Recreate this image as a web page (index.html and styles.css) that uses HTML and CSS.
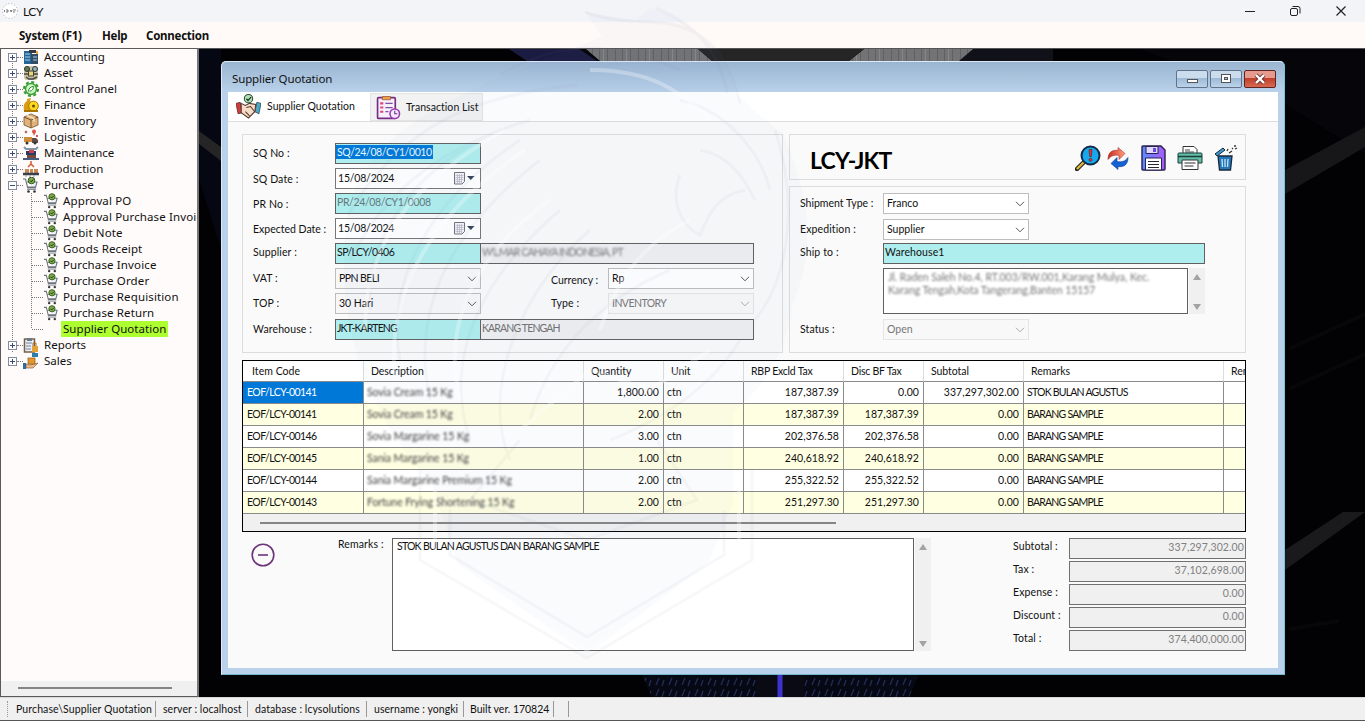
FILE: index.html
```html
<!DOCTYPE html>
<html lang="en">
<head>
<meta charset="utf-8">
<title>LCY</title>
<link rel="stylesheet" href="styles.css">
</head>
<body>
<svg class="defs" width="0" height="0">
  <symbol id="cart" viewBox="0 0 16 16"><path d="M0 2h2.500l2.200 9H13M4 5h10L12.600 10H5" fill="#eef2f6" stroke="#6b737d" stroke-width="1.100"/><circle cx="8.500" cy="3.500" r="3.300" fill="#7fae4a" stroke="#34591f"/><path d="M7 3.500l1.200 1.300L10.300 2.500" fill="none" stroke="#173010"/><path d="M4 12.500h9" stroke="#8d949c"/><circle cx="5.500" cy="14.500" r="1.300" fill="#333"/><circle cx="11.500" cy="14.500" r="1.300" fill="#333"/></symbol>
  <symbol id="chev" viewBox="0 0 10 6"><path d="M1 .8l4 4 4-4" fill="none" stroke="currentColor"/></symbol>
  <symbol id="cal" viewBox="0 0 21 13"><path d="M.5.5h10v9l-2.500 2.500H.5z" fill="#f4f5f8" stroke="#70747e"/><path d="M3.500 2v9M5.500 2v9M7.500 2v9M1.500 3.500h8M1.500 5.500h8M1.500 7.500h8M1.500 9.500h6" stroke="#a9acb8" stroke-width=".6"/><path d="M13 4h7.500l-3.700 4z" fill="#33415c"/></symbol>
</svg>

<header class="titlebar">
  <svg class="applogo" viewBox="0 0 16 16"><circle cx="8" cy="8" r="7.400" fill="#fff" stroke="#aaa" stroke-dasharray="1 2"/><path d="M2.500 7v2M4 7h2v2H4M8 7l1 1v1l1-2M11 7h3M11 9h2" stroke="#555" fill="none" stroke-width=".8"/></svg>
  <span class="appname">LCY</span>
  <svg class="winctl" viewBox="0 0 110 20"><g fill="none" stroke="#222"><path d="M5 10.500h10"/><rect x="50.500" y="7.500" width="7" height="7" rx="1.500"/><path d="M52.500 5.500h5.500q2 0 2 2v5"/><path d="M96.500 5.500l9 9M105.500 5.500l-9 9" stroke-width="1.200"/></g></svg>
</header>
<nav class="menubar"><span class="m1">System (F1)</span><span class="m2">Help</span><span class="m3">Connection</span></nav>

<div class="main">
  <aside class="side">
    <ul class="tree">
      <li><i class="box"></i><svg viewBox="0 0 16 16"><rect x="1" y="2" width="8" height="13" fill="#25669a"/><rect x="8" y="5" width="7" height="10" fill="#344b66"/><path d="M2 5h5M2 8h5M2 11h5M10 8h4M10 11h4" stroke="#a9d4e5"/><path d="M6 1h7v3H6z" fill="#33383e"/><path d="M13 2h2v3h-2z" fill="#e4a640"/></svg>Accounting</li>
      <li><i class="box"></i><svg viewBox="0 0 16 16"><rect x="1" y="1" width="14" height="14" rx="3" fill="#c9c3a3"/><circle cx="4" cy="4" r="2.500" fill="#5e7b4d" stroke="#333"/><circle cx="12" cy="4" r="2.500" fill="#8db5b9" stroke="#333"/><rect x="5.500" y="6" width="5" height="5" fill="#e6d277" stroke="#444"/><path d="M1 9h4M11 9h4M3 12l3 2h4l4-2" stroke="#444" stroke-width="1.400" fill="none"/></svg>Asset</li>
      <li><i class="box"></i><svg viewBox="0 0 16 16"><circle cx="8" cy="8" r="7" fill="none" stroke="#369b32" stroke-width="2" stroke-dasharray="3 2.500"/><circle cx="8" cy="8" r="5.500" fill="#d2f7c6" stroke="#3ba437" stroke-width="1.500"/><path d="M5.500 10.500c0-3 2-5 5-5 0 3-2 5-4 4.500" fill="#fff" stroke="#25852b"/></svg>Control Panel</li>
      <li><i class="box"></i><svg viewBox="0 0 16 16"><path d="M4 2l4-1-1 3c3 2 4 5 3 10H1C0 9 1 6 4 4z" fill="#d99c15"/><circle cx="10.500" cy="9" r="4.800" fill="#ffd91d" stroke="#ad7900"/><circle cx="10.500" cy="9" r="1.500" fill="#614c12"/><path d="M1 14h14" stroke="#a97500" stroke-width="2"/></svg>Finance</li>
      <li><i class="box"></i><svg viewBox="0 0 16 16"><path d="M8 1l7 3v8l-7 3-7-3V4z" fill="#dfb27a" stroke="#765230" stroke-width=".8"/><path d="M1 4l7 3 7-3M8 7v8" fill="none" stroke="#765230"/><path d="M4 2.500l7 3v3" stroke="#f5e1bd" stroke-width="1.500" fill="none"/></svg>Inventory</li>
      <li><i class="box"></i><svg viewBox="0 0 16 16"><path d="M1 8h8v5H1z" fill="#d28b3a"/><path d="M9 9h4l2 2v3H9z" fill="#5c4d47"/><circle cx="4" cy="14" r="1.500" fill="#333"/><circle cx="12" cy="14" r="1.500" fill="#333"/><circle cx="11" cy="2.500" r="2" fill="#dc5547"/><path d="M11 7l-1.500-4h3z" fill="#dc5547"/><circle cx="3" cy="3" r="1.300" fill="#b26a5a"/><path d="M13 7h2" stroke="#d55" stroke-width="2"/></svg>Logistic</li>
      <li><i class="box"></i><svg viewBox="0 0 16 16"><path d="M1 2l2 2h10l2-2" stroke="#8395a8" stroke-width="2" fill="none"/><path d="M3 6h10v4H3z" fill="#293b68"/><path d="M6 5h5v3H6z" fill="#cf4149"/><path d="M4 10h9v3H4z" fill="#77493b"/><path d="M0 14h16" stroke="#465c80" stroke-width="2"/></svg>Maintenance</li>
      <li><i class="box"></i><svg viewBox="0 0 16 16"><path d="M8 0v4M5 6l3-3 3 3" stroke="#d35b35" stroke-width="1.500" fill="none"/><path d="M2 8h4v4H2zM7 8h3v4H7zM11 8h4v4h-4z" fill="#c98952"/><path d="M0 13h16" stroke="#37404c" stroke-width="2.500"/><path d="M2 15h12" stroke="#999" stroke-dasharray="2 2"/></svg>Production</li>
      <li><i class="box minus"></i><svg><use href="#cart"/></svg>Purchase</li>
    </ul>
    <ul class="tree child">
      <li><svg><use href="#cart"/></svg>Approval PO</li>
      <li><svg><use href="#cart"/></svg>Approval Purchase Invoice</li>
      <li><svg><use href="#cart"/></svg>Debit Note</li>
      <li><svg><use href="#cart"/></svg>Goods Receipt</li>
      <li><svg><use href="#cart"/></svg>Purchase Invoice</li>
      <li><svg><use href="#cart"/></svg>Purchase Order</li>
      <li><svg><use href="#cart"/></svg>Purchase Requisition</li>
      <li><svg><use href="#cart"/></svg>Purchase Return</li>
      <li><b class="sel">Supplier Quotation</b></li>
    </ul>
    <ul class="tree last">
      <li><i class="box"></i><svg viewBox="0 0 16 16"><rect x="1.500" y="2" width="10" height="13" fill="#e9eef5" stroke="#766047" stroke-width="1.500"/><path d="M4 1h5v3H4z" fill="#687987"/><path d="M3 6h6M3 9h5M3 12h5" stroke="#7182a3"/><path d="M9 9h6v6H9z" fill="#e3a336"/><path d="M10 9V6h3v3" fill="none" stroke="#a87020"/></svg>Reports</li>
      <li><i class="box"></i><svg viewBox="0 0 16 16"><path d="M0 10h3v6H0z" fill="#246fa5"/><path d="M3 11l4 1 8-2-5 5H3z" fill="#efbb8b" stroke="#6e4b33" stroke-width=".6"/><rect x="5" y="5" width="7" height="6" fill="#e7962d" stroke="#8b5a18" stroke-width=".7"/><path d="M9 0h6v4H9z" fill="#2980ac"/></svg>Sales</li>
    </ul>
    <div class="sidescroll"><span></span></div>
  </aside>

  <main class="desktop">
    <svg class="wall" viewBox="0 0 1166 648" preserveAspectRatio="none">
      <defs><pattern id="slats" width="23" height="12" patternUnits="userSpaceOnUse"><rect width="23" height="12" fill="#737375"/><path d="M2.500 0v12M9.500 0v12M17.500 0v12" stroke="#5f5f64"/><path d="M13.500 0v12" stroke="#868688"/></pattern>
      <pattern id="lights" width="13" height="11" patternUnits="userSpaceOnUse"><rect width="13" height="11" fill="#060814"/><path d="M2 9l3-7M8 10l2-6" stroke="#232b55" stroke-width="1.300"/></pattern></defs>
      <rect width="1166" height="648" fill="#020204"/>
      <path d="M0 0h22v200L0 130z" fill="#050713"/>
      <path d="M0 82l22 16v14L0 95z" fill="#252525"/>
      <path d="M310 0h70l18 12h-70z" fill="#1b1a40"/>
      <path d="M387 0h112l14 12H401zM665 0h112l-16 12H650z" fill="url(#slats)"/>
      <path d="M499 0h166l-15 12H513z" fill="#252526"/>
      <path d="M774 0h80v12h-94z" fill="#11111a"/>
      <path d="M940 0h226v105l-80-50z" fill="#05050a"/>
      <path d="M1086 121l80-43v20l-80 47z" fill="#171719"/>
      <path d="M1086 501l58-38h22l-80 58z" fill="#1a1a1c"/>
      <path d="M1090 300l76-35M1090 340l76-35M1090 580l50-8" stroke="#070708" stroke-width="4"/>
      <path d="M443 626h277l-10 22H453z" fill="url(#lights)"/>
      <path d="M557 626h48v22h-48z" fill="#0a0a14"/><path d="M581 626v22" stroke="#3c32cc" stroke-width="5"/>
    </svg>

    <section class="window">
      <div class="wtitle"><span>Supplier Quotation</span>
        <div class="wbtns"><i class="wb"><svg viewBox="0 0 30 16"><rect x="10.500" y="8.500" width="10" height="3" fill="#fff" stroke="#555"/></svg></i><i class="wb"><svg viewBox="0 0 30 16"><rect x="10.500" y="3.500" width="9" height="8" fill="#fff" stroke="#555"/><rect x="13.500" y="6.500" width="3" height="2" fill="#adc7df" stroke="#555"/></svg></i><i class="wb close"><svg viewBox="0 0 30 16"><path d="M11 4l8 8M19 4l-8 8" stroke="#633" stroke-width="4"/><path d="M11 4l8 8M19 4l-8 8" stroke="#fff" stroke-width="2.400"/></svg></i></div>
      </div>
      <div class="client">
        <div class="tabs">
          <div class="tab t1"><svg viewBox="0 0 24 24"><path d="M0 9l4-1 2 10-4 1z" fill="#d63b3b" stroke="#472020" stroke-width=".7"/><path d="M24 9l-4-1-2 9 4 2z" fill="#4aa8c4" stroke="#203c47" stroke-width=".7"/><path d="M5 9l4 2 4-2 6 1-1 7-6 6-7-5z" fill="#f7dcc8" stroke="#55392f"/><path d="M10 13l4-1 4 5M9 17l4 4" stroke="#55392f" fill="none"/><circle cx="12" cy="4.500" r="4" fill="#b5dfb5" stroke="#2d4d38"/><path d="M10 4.500l1.500 1.700L14.500 3" fill="none" stroke="#173d25" stroke-width="1.300"/></svg><span>Supplier Quotation</span></div>
          <div class="tab t2"><svg viewBox="0 0 24 24"><rect x="1.500" y="2.500" width="17" height="20" rx="1" fill="#f8effd" stroke="#742c86" stroke-width="1.600"/><path d="M6 1.500h8v3H6z" fill="#f5a047" stroke="#8e5534" stroke-width=".7"/><path d="M4 8h3M4 12h3M4 16h3" stroke="#d84877" stroke-width="2"/><path d="M9 8h7M9 12h7M9 16h3" stroke="#8050a4" stroke-width="1.200"/><circle cx="18" cy="18" r="4.600" fill="#f5eaff" stroke="#9a3bad" stroke-width="1.500"/><path d="M18 15v3h2.500" stroke="#61348a" fill="none"/></svg><span>Transaction List</span></div>
        </div>
        <div class="page">
          <div class="top">
            <div class="panel form">
              <div class="row"><label class="up">SQ No :</label><div class="in aqua doc"><mark>SQ/24/08/CY1/0010</mark></div></div>
              <div class="row"><label>SQ Date :</label><div class="in date">15/08/2024<svg><use href="#cal"/></svg></div></div>
              <div class="row"><label>PR No :</label><div class="in aqua gray doc">PR/24/08/CY1/0008</div></div>
              <div class="row"><label class="nar">Expected Date :</label><div class="in date">15/08/2024<svg><use href="#cal"/></svg></div></div>
              <div class="row"><label class="up2">Supplier :</label><div class="in aqua doc2">SP/LCY/0406</div><div class="in ext"><span class="blur">WILMAR CAHAYA INDONESIA, PT</span></div></div>
              <div class="row"><label class="up">VAT :</label><div class="in combo caps">PPN BELI<svg><use href="#chev"/></svg></div><label class="l2 down">Currency :</label><div class="in combo lit">Rp<svg><use href="#chev"/></svg></div></div>
              <div class="row"><label class="up">TOP :</label><div class="in combo">30 Hari<svg><use href="#chev"/></svg></div><label class="l2 up">Type :</label><div class="in combo off caps">INVENTORY<svg><use href="#chev"/></svg></div></div>
              <div class="row wh"><label class="up">Warehouse :</label><div class="in aqua caps2">JKT-KARTENG</div><div class="in ext caps2">KARANG TENGAH</div></div>
            </div>
            <div class="right">
              <div class="panel brand"><strong>LCY-JKT</strong>
                <div class="tools">
                  <svg class="k1" viewBox="0 0 26 26"><path d="M2 24l7-7" stroke="#222" stroke-width="4.500" stroke-linecap="round"/><path d="M2.500 23.500l6-6" stroke="#d9b83c" stroke-width="2.400" stroke-linecap="round"/><circle cx="15.500" cy="10.500" r="9" fill="#18a8ed" stroke="#122b48" stroke-width="2"/><path d="M14 4.500h3l-.7 7h-1.600z" fill="#f32d36" stroke="#421" stroke-width=".6"/><circle cx="15.500" cy="14.800" r="1.500" fill="#f32d36" stroke="#421" stroke-width=".6"/></svg>
                  <svg class="k2" viewBox="0 0 22 24"><defs><linearGradient id="rd"><stop stop-color="#c9281e"/><stop offset="1" stop-color="#ffa080"/></linearGradient></defs><path d="M1 13C1 6 5 3 11 4V1l7 6-6 6v-4C7 8 4 9 1 13z" fill="url(#rd)" stroke="#a33" stroke-width=".6"/><path d="M21 11c0 7-4 10-10 9v3l-7-6 6-6v4c5 1 8 0 11-4z" fill="#1263d3" stroke="#133b91" stroke-width=".6"/></svg>
                  <svg class="k3" viewBox="0 0 25 26"><defs><linearGradient id="fl"><stop stop-color="#5a8cff"/><stop offset="1" stop-color="#a95cf5"/></linearGradient></defs><path d="M2 1h18l4 4v19q0 1-1 1H2q-1 0-1-1V2q0-1 1-1z" fill="url(#fl)" stroke="#282050" stroke-width="1.400"/><path d="M5 1.500h12v7H5z" fill="#e1d9ff" stroke="#282050"/><path d="M12 3h3v4h-3z" fill="#694bd5"/><path d="M4.500 13h16v12h-16z" fill="#fff" stroke="#282050"/><path d="M7 16.500h11M7 19.500h11M7 22.500h11" stroke="#252535"/></svg>
                  <svg class="k4" viewBox="0 0 26 26"><path d="M6 9V1.500h11l3 3V9" fill="#fff" stroke="#333"/><path d="M8 5h5M8 7h9" stroke="#444"/><path d="M2 8h22q1 0 1 1v9H1V9q0-1 1-1z" fill="#65bda9" stroke="#173f38"/><path d="M1 11.500h24" stroke="#173f38" stroke-width="1.500"/><path d="M5 15h16v9.500H5z" fill="#fff" stroke="#333"/><path d="M7.500 18h11M7.500 21h9" stroke="#333"/></svg>
                  <svg class="k5" viewBox="0 0 24 26"><path d="M4 11h14l-1.500 14h-11z" fill="#2576b9" stroke="#172a3a" stroke-width="1.300"/><path d="M8 14l.5 8M11 14v8M14 14l-.5 8" stroke="#c3e7fa" stroke-width="1.300"/><path d="M1 9l8-6 2 2-8 6z" fill="#3d9bd4" stroke="#172a3a"/><path d="M13 6l1-2M15 8l3-2M18 4l1-1M21 4l2-1M20 1h2" stroke="#333" stroke-width="1.300"/></svg>
                </div>
              </div>
              <div class="panel ship">
                <div class="row"><label class="nar">Shipment Type :</label><div class="in combo lit">Franco<svg><use href="#chev"/></svg></div></div>
                <div class="row exp"><label>Expedition :</label><div class="in combo lit">Supplier<svg><use href="#chev"/></svg></div></div>
                <div class="row"><label class="up">Ship to :</label><div class="in aqua wide">Warehouse1</div></div>
                <div class="row addr"><label></label><div class="area"><span class="blur">Jl. Raden Saleh No.4, RT.003/RW.001,Karang Mulya, Kec.<br>Karang Tengah,Kota Tangerang,Banten 15157</span></div><div class="vs"><i></i><i class="dn"></i></div></div>
                <div class="row stat"><label>Status :</label><div class="in combo off">Open<svg><use href="#chev"/></svg></div></div>
              </div>
            </div>
          </div>

          <div class="gridbox">
            <div class="tr head"><span>Item Code</span><span>Description</span><span>Quantity</span><span>Unit</span><span>RBP Excld Tax</span><span>Disc BF Tax</span><span>Subtotal</span><span>Remarks</span><span>Rem</span></div>
            <div class="tr"><span class="cur">EOF/LCY-00141</span><span class="pix"><em>Sovia Cream 15 Kg</em></span><span>1,800.00</span><span>ctn</span><span>187,387.39</span><span>0.00</span><span>337,297,302.00</span><span>STOK BULAN AGUSTUS</span><span></span></div>
            <div class="tr alt"><span>EOF/LCY-00141</span><span class="pix"><em>Sovia Cream 15 Kg</em></span><span>2.00</span><span>ctn</span><span>187,387.39</span><span>187,387.39</span><span>0.00</span><span>BARANG SAMPLE</span><span></span></div>
            <div class="tr"><span>EOF/LCY-00146</span><span class="pix"><em>Sovia Margarine 15 Kg</em></span><span>3.00</span><span>ctn</span><span>202,376.58</span><span>202,376.58</span><span>0.00</span><span>BARANG SAMPLE</span><span></span></div>
            <div class="tr alt"><span>EOF/LCY-00145</span><span class="pix"><em>Sania Margarine 15 Kg</em></span><span>1.00</span><span>ctn</span><span>240,618.92</span><span>240,618.92</span><span>0.00</span><span>BARANG SAMPLE</span><span></span></div>
            <div class="tr"><span>EOF/LCY-00144</span><span class="pix"><em>Sania Margarine Premium 15 Kg</em></span><span>2.00</span><span>ctn</span><span>255,322.52</span><span>255,322.52</span><span>0.00</span><span>BARANG SAMPLE</span><span></span></div>
            <div class="tr alt"><span>EOF/LCY-00143</span><span class="pix"><em>Fortune Frying Shortening 15 Kg</em></span><span>2.00</span><span>ctn</span><span>251,297.30</span><span>251,297.30</span><span>0.00</span><span>BARANG SAMPLE</span><span></span></div>
            <div class="hs"><span></span></div>
          </div>

          <div class="bottom">
            <svg class="minusbtn" viewBox="0 0 24 24"><circle cx="12" cy="12" r="10.800" fill="none" stroke="#6d3579" stroke-width="1.600"/><path d="M7 12h10" stroke="#6d3579" stroke-width="1.600"/></svg>
            <label class="rl">Remarks :</label>
            <div class="area notes">STOK BULAN AGUSTUS DAN BARANG SAMPLE</div>
            <div class="vs big"><i></i><i class="dn"></i></div>
            <div class="totals">
              <div><label>Subtotal :</label><output>337,297,302.00</output></div>
              <div><label>Tax :</label><output>37,102,698.00</output></div>
              <div><label>Expense :</label><output>0.00</output></div>
              <div><label>Discount :</label><output>0.00</output></div>
              <div><label>Total :</label><output>374,400,000.00</output></div>
            </div>
          </div>
        </div>
      </div>
    </section>
  </main>
</div>

<footer class="status"><span class="s0"></span><span class="s1">Purchase\Supplier Quotation</span><span class="s2">server : localhost</span><span class="s3">database : lcysolutions</span><span class="s4">username : yongki</span><span class="s5">Built ver. 170824</span><span class="s6"></span></footer>

<svg class="mark" viewBox="0 0 1365 721">
  <path d="M585 12l50 8 15-12c50 15 75 45 85 85 12 10 25 25 48 40 25 60 35 110 10 170-8 50-25 80-60 110v90l-25 60-121 92-130-92-25-80c-60-60-100-160-85-260 5-60 50-100 140-140 40-20 80-30 115-47z" fill="#6f82c8" opacity=".035"/>
  <g fill="none" stroke="#7d80a0" opacity=".055" stroke-width="3"><path d="M585 12c30 12 60 8 85 12 40 8 60 35 70 80M655 8c40 15 65 45 72 85M500 75c60-35 110-35 180-5M348 215c50-85 120-120 230-130M350 260c30-60 80-110 180-140M370 310c-5-70 40-140 130-180M400 360c-15-80 30-160 120-220M430 400c-20-90 20-170 110-240M470 440c-30-90 20-170 90-230M510 460c-30-70 10-170 80-230M680 100c45 10 80 50 90 90M700 150c30 5 45 30 55 50M680 175c-10 25 0 50 20 60 10-25 20-40 45-45M775 130c20 60 20 140-20 190M610 440c50-20 100-50 130-100M530 420c20-70 70-120 140-150M420 470v90l167 98 165-98v-90M450 510v45l137 82 137-82v-45M520 440l-50 60 117 40 110-40-40-60"/></g>
  <g fill="none" stroke="#fff" opacity=".3" stroke-width="4"><path d="M365 330c0-90 50-150 140-200M395 380c-10-90 40-170 130-230M460 400c-20-80 20-150 90-200M590 70c60 0 90 20 120 50M600 330c20-60 50-90 90-110M520 430l70-60 60 20 60-40M435 490v70l152 90 152-90v-70"/></g>
</svg>
</body>
</html>
```
FILE: styles.css
```css
* { box-sizing: border-box; }
body { margin: 0; width: 1365px; height: 721px; overflow: hidden; position: relative; display: flex; flex-direction: column; font-family: Lato, "Open Sans", sans-serif; font-size: 10.5px; color: #111; background: #f0f0f0; }
.defs { position: absolute; }
.titlebar { height: 22px; background: #f2f4f8; display: flex; align-items: center; padding-left: 2px; flex: none; }
.applogo { width: 16px; height: 16px; }
.appname { font-size: 12px; margin-left: 5px; letter-spacing: -.4px; }
.winctl { width: 110px; height: 20px; margin-left: auto; margin-right: 15px; }
.menubar { height: 26px; background: #fffaf8; display: flex; align-items: center; padding: 1px 0 0 19px; font: bold 11.5px "Noto Sans", sans-serif; flex: none; letter-spacing: -.25px; }
.m1 { width: 83px; } .m2 { width: 44px; }
.main { height: 649px; display: flex; flex: none; }
.side { width: 199px; border: 1px solid #5a5a5a; border-right: 2px solid #777; background: #fffbfa; overflow: hidden; display: flex; flex-direction: column; flex: none; }
.tree { list-style: none; margin: 0; padding: 0 0 0 7px; font: 11.5px "Noto Sans", sans-serif; background: repeating-linear-gradient(#777 0 1px, transparent 1px 2px) 11px 8px / 1px 100% no-repeat; }
.tree li { height: 16px; display: flex; align-items: center; white-space: nowrap; line-height: 16px; }
.tree svg { width: 16px; height: 16px; margin-right: 5px; flex: none; overflow: visible; }
.box { width: 9px; height: 9px; border: 1px solid #848ca0; background: linear-gradient(#3b4c78, #3b4c78) 1px 3px / 5px 1px no-repeat, linear-gradient(#3b4c78, #3b4c78) 3px 1px / 1px 5px no-repeat, #fff; margin-right: 6px; position: relative; flex: none; }
.box::after { content: ""; position: absolute; left: 8px; top: 3px; width: 6px; border-top: 1px dotted #777; }
.box.minus { background: linear-gradient(#3b4c78, #3b4c78) 1px 3px / 5px 1px no-repeat, #fff; }
.child { padding-left: 31px; letter-spacing: .13px; background-image: repeating-linear-gradient(#777 0 1px, transparent 1px 2px), repeating-linear-gradient(#777 0 1px, transparent 1px 2px); background-position: 11px 0, 30px 0; background-size: 1px 144px, 1px 136px; }
.child li::before { content: ""; width: 11px; border-top: 1px dotted #777; flex: none; }
.child svg { margin: 0 4px 0 1px; width: 15px; }
.sel { font-weight: 400; background: #adff2f; height: 16px; margin-left: 18px; padding: 0 2px; line-height: 15px; letter-spacing: .05px; }
.last { background-size: 1px 16px; background-position: 11px 0; }
.sidescroll { margin-top: auto; height: 15px; background: #f0f0f0; padding: 6px 25px 0 17px; }
.sidescroll span { display: block; height: 2px; background: #858585; }
.desktop { flex: 1; position: relative; background: #000; overflow: hidden; border-top: 1px solid #555; }
.wall { display: block; width: 1166px; height: 648px; }
.window { position: absolute; left: 22px; top: 12px; width: 1064px; height: 614px; background: #b9d1ea; border: 1px solid #dcebf5; border-bottom-color: #72b8cf; border-right-color: #72c5dc; border-radius: 5px 5px 0 0; padding: 0 6px; }
.wtitle { height: 30px; margin: 0 -6px; padding: 6px 8px 0 10px; background: linear-gradient(#9ab5d1, #b9d1ea); border-radius: 5px 5px 0 0; display: flex; justify-content: space-between; font: 11.5px/22px "Noto Sans", sans-serif; letter-spacing: -.13px; }
.wbtns { display: flex; gap: 2px; margin-top: 2px; }
.wb { width: 32px; height: 18px; border: 1px solid #60738b; border-radius: 2px; background: linear-gradient(#cbdced 0 45%, #9db9d6 46%, #bcd4e9); }
.wb svg { display: block; width: 30px; height: 16px; }
.wb.close { background: linear-gradient(#e59a8d 0 45%, #c03e2a 46%, #d86a52); border-color: #5f2520; }
.client { height: 576px; background: #fafafa; }
.tabs { height: 30px; background: #fff; border-bottom: 1px solid #dedede; display: flex; }
.tab { display: flex; align-items: center; height: 29px; white-space: nowrap; letter-spacing: .05px; }
.tab svg { width: 25px; height: 25px; }
.t1 { width: 142px; padding-left: 8px; } .t1 span { margin: -1px 0 0 6px; }
.t2 { width: 113px; background: #f2f2f2; border: 1px solid #e4e4e4; padding-left: 5px; margin-top: 1px; height: 28px; } .t2 span { margin: 0 0 0 5px; }
.page { padding: 12px 32px 0 14px; background: #fafafa; }
.top { display: grid; grid-template-columns: 541px 457px; gap: 6px; height: 219px; }
.panel { border: 1px solid #dcdcdc; background: #fafafa; }
.form { padding: 8px 0 0 10px; display: flex; flex-direction: column; gap: 4px; }
.row { display: flex; height: 21px; align-items: center; flex: none; }
.row.wh { margin-top: 1px; }
label { letter-spacing: .12px; white-space: nowrap; }
.row > label { width: 82px; flex: none; }
.row > .nar { letter-spacing: 0; }
.row > .up { padding-bottom: 2px; }
.row > .up2 { padding-bottom: 4px; }
.in { width: 146px; height: 21px; border: 1px solid #606060; padding: 0 1px; line-height: 17px; white-space: nowrap; position: relative; flex: none; letter-spacing: .1px; }
.aqua { background: #afeeee; } .aqua.gray { color: #66777a; }
.doc { letter-spacing: -.38px; line-height: 16px; }
.doc2 { letter-spacing: -.55px; line-height: 16px; }
.in mark { background: #0078d7; color: #e5f6ff; display: inline-block; height: 14px; line-height: 15px; margin: 1px 0 0 -1px; padding: 0 1px; vertical-align: top; }
.date { background: #fff; border-color: #777; line-height: 19px; letter-spacing: -.2px; display: flex; justify-content: space-between; padding: 0 2px; }
.date svg { width: 21px; height: 13px; margin: 3px 3px 0 0; }
.combo { border-color: #bdbdbd; background: #f7f7f8; display: flex; align-items: center; justify-content: space-between; padding: 0 3px; line-height: 19px; letter-spacing: 0; }
.combo svg { width: 10px; height: 6px; color: #555; }
.lit { background: #fff; } .off { color: #777; border-color: #e5e5e5; background: #f8f8f8; } .off svg { color: #aaa; }
.ext { width: 274px; margin-left: -1px; background: #efeff0; color: #707070; }
.caps { letter-spacing: -.55px; }
.caps2 { letter-spacing: -.85px; font-size: 10.5px; }
.row > .l2 { width: 57px; margin-left: 70px; } .down { padding-top: 3px; }
.row > .down { letter-spacing: 0; }
.blur { filter: blur(.8px); color: #777; display: inline-block; line-height: 13px; letter-spacing: -.05px; }
.ext .blur { letter-spacing: -.85px; line-height: 16px; }
.right { display: flex; flex-direction: column; gap: 6px; }
.brand { height: 46px; display: flex; padding: 12px 7px 0 20px; justify-content: space-between; }
.brand strong { font: bold 23px/26px Lato, sans-serif; letter-spacing: -.75px; color: #000; }
.tools { display: flex; align-items: flex-start; margin-top: -2px; }
.k1 { width: 26px; height: 26px; margin-right: 6px; } .k2 { width: 22px; height: 25px; margin: 1px 12px 0 0; } .k3 { width: 25px; height: 26px; margin-right: 11px; } .k4 { width: 26px; height: 26px; margin-right: 11px; } .k5 { width: 24px; height: 26px; }
.ship { height: 167px; padding: 6px 0 0 10px; display: flex; flex-direction: column; gap: 4px; }
.ship .row > label { width: 83px; margin-top: -2px; }
.ship .row.exp { margin-top: 1px; margin-bottom: -1px; }
.ship .stat { margin-top: 1px; }
.wide { width: 322px; }
.ship .addr { height: 46px; }
.area { background: #fff; border: 1px solid #606060; }
.addr .area { width: 305px; height: 46px; padding: 2px 4px; }
.vs { width: 16px; height: 46px; background: #f0f0f0; margin-left: 1px; display: flex; flex-direction: column; justify-content: space-between; align-items: center; padding: 6px 0 4px; }
.vs i { border: 4.5px solid transparent; border-top: 0; border-bottom: 6px solid #a3a3a3; } .vs .dn { transform: rotate(180deg); }
.gridbox { margin-top: 7px; height: 172px; border: 1px solid #000; overflow: hidden; background: #f0f0f0; }
.tr { display: grid; grid-template-columns: 121px 220px 80px 80px 100px 80px 100px 200px 21px; height: 22px; background: #fff; }
.tr span { border-right: 1px solid #8a8a8a; border-bottom: 1px solid #8a8a8a; line-height: 21px; padding: 0 4px 0 3px; white-space: nowrap; overflow: hidden; }
.tr span:first-child { letter-spacing: -.55px; padding-left: 4px; }
.tr span:last-child { border-right: 0; padding-right: 0; }
.alt { background: #ffffe1; }
.tr:not(.head) span:nth-child(3), .tr:not(.head) span:nth-child(5), .tr:not(.head) span:nth-child(6), .tr:not(.head) span:nth-child(7) { text-align: right; letter-spacing: .07px; padding-left: 0; }
.tr:not(.head) span:nth-child(8) { letter-spacing: -.78px; }
.tr.head { height: 21px; } .tr.head span { padding-left: 7px; border-right-color: #ddd; line-height: 21px; letter-spacing: -.05px; } .tr.head span:first-child { padding-left: 9px; letter-spacing: .05px; }
.tr.head span:nth-child(5), .tr.head span:nth-child(6) { letter-spacing: -.22px; }
.tr span.cur { background: #0078d7; color: #fff; }
.pix em { font-style: normal; filter: blur(.9px); display: inline-block; line-height: 18px; color: #444; letter-spacing: -.1px; }
.hs { padding: 8px 0 0 17px; } .hs span { display: block; width: 576px; height: 2px; background: #858585; }
.bottom { margin-top: 6px; display: flex; height: 113px; }
.minusbtn { width: 24px; height: 24px; margin: 5px 0 0 9px; }
.rl { margin: 0 0 0 63px; width: 54px; }
.notes { width: 522px; height: 113px; padding: 1px 4px; letter-spacing: -.81px; word-spacing: .4px; }
.vs.big { height: 113px; }
.totals { margin-left: auto; display: flex; flex-direction: column; gap: 2px; width: 233px; }
.totals div { display: flex; height: 21px; justify-content: space-between; }
.totals label { line-height: 17px; }
output { display: block; width: 177px; height: 21px; border: 1px solid #707070; background: #f0f0f0; color: #808080; text-align: right; line-height: 16px; padding-right: 1px; letter-spacing: .1px; }
.status { height: 24px; background: #f0f0f0; border-top: 1px solid #d9d9d9; border-bottom: 1px solid #555; display: flex; padding: 3px 0; font-size: 10.5px; flex: none; white-space: nowrap; }
.status span { border-right: 1px solid #999; line-height: 17px; padding-left: 7px; letter-spacing: .06px; }
.status .s0 { width: 8px; padding: 0; border-right: 1px dotted #999; }
.s1 { width: 148px; } .s2 { width: 92px; } .s3 { width: 119px; } .s4 { width: 97px; } .s5 { width: 90px; } .s6 { width: 15px; }
.status .s1 { padding-left: 8px; letter-spacing: .1px; }
.status .s5 { padding-left: 6px; letter-spacing: -.02px; }
.mark { position: absolute; left: 0; top: 0; width: 1365px; height: 721px; pointer-events: none; }
```
